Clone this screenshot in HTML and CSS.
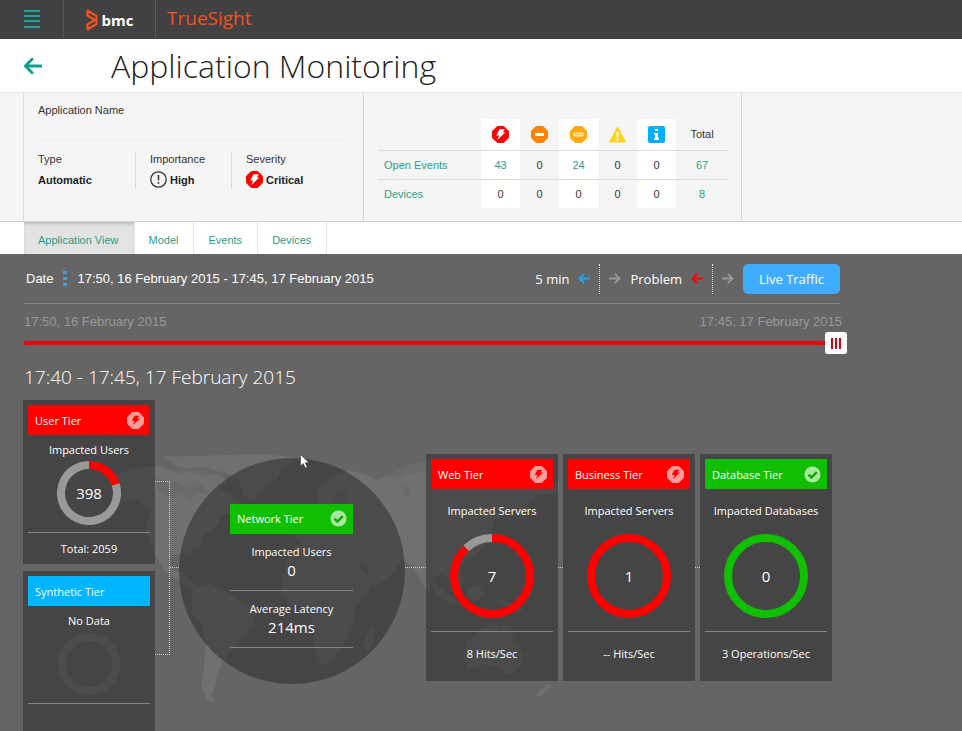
FILE: index.html
```
<!DOCTYPE html>
<html lang="en">
<head>
    <meta charset="UTF-8">
    <meta name="viewport" content="width=device-width, initial-scale=1.0">
    <title>TrueSight - Application Monitoring</title>
    <link rel="stylesheet" href="styles.css">
</head>
<body>

    <!-- shared icons -->
    <svg class="sprite" aria-hidden="true">
        <symbol id="critical" viewBox="0 0 18 18">
            <path d="M5.500 .5h7l5 5v7l-5 5h-7l-5-5v-7z" fill="#f00" stroke="#f00" stroke-linejoin="round"/>
            <path d="M8 3.500h5.500L11.500 7H14l-8.500 8 2-5H4.500z" fill="#fff"/>
        </symbol>
        <symbol id="bolt" viewBox="0 0 18 18">
            <path d="M6 1h6l5 5v6l-5 5H6l-5-5V6z" fill="#ff9c9c" stroke="#ff9c9c" stroke-width="2" stroke-linejoin="round"/>
            <path d="M8 4h5l-2 3h3l-8 7 2-4.500H5z" fill="#f00"/>
        </symbol>
        <symbol id="check" viewBox="0 0 18 18">
            <circle cx="9" cy="9" r="8.500" fill="#a8e8a0"/>
            <path d="M4.800 9.200l3 3 5.700-5.700" fill="none" stroke="#10a800" stroke-width="2.600"/>
        </symbol>
        <symbol id="arrow" viewBox="0 0 20 18">
            <path d="M19 9H3M9.500 2L2.500 9l7 7" fill="none" stroke="currentColor" stroke-width="3" stroke-linejoin="round" stroke-linecap="round"/>
        </symbol>
    </svg>

    <header class="topbar">
        <button class="menu" aria-label="Menu">
            <svg width="16" height="19" viewBox="0 0 16 19"><path d="M0 1h16M0 6h16M0 11h16M0 17h16" stroke="#1aa598" stroke-width="2"/></svg>
        </button>
        <a class="brand" href="#">
            <svg width="12" height="22" viewBox="0 0 12 22"><path d="M1.500 1.500L10.500 7v3L1.500 15.500v5l9-5.500v-3L1.500 6.500z" fill="none" stroke="#f4511e" stroke-width="2.200" stroke-linejoin="round"/></svg>
            <span>bmc</span>
        </a>
        <a class="product" href="#">TrueSight</a>
    </header>

    <div class="title-bar">
        <a class="back" href="#" aria-label="Back"><svg width="19" height="18"><use href="#arrow"/></svg></a>
        <h1>Application Monitoring</h1>
    </div>

    <section class="info">
        <div class="details">
            <div class="app-name">Application Name</div>
            <div class="facts">
                <div class="fact type"><span>Type</span><strong>Automatic</strong></div>
                <div class="fact importance"><span>Importance</span>
                    <strong><svg width="17" height="17" viewBox="0 0 17 17"><circle cx="8.500" cy="8.500" r="7.700" fill="none" stroke="#333" stroke-width="1.300"/><path d="M8.500 4v5.500M8.500 11v1.800" stroke="#333" stroke-width="1.500"/></svg>High</strong>
                </div>
                <div class="fact"><span>Severity</span>
                    <strong><svg width="17" height="17"><use href="#critical"/></svg>Critical</strong>
                </div>
            </div>
        </div>
        <div class="events">
            <table>
                <thead>
                    <tr>
                        <td></td>
                        <th scope="col" aria-label="Critical"><svg width="17" height="17"><use href="#critical"/></svg></th>
                        <th scope="col" aria-label="Major"><svg width="17" height="17" viewBox="0 0 17 17"><path d="M5 0h7l5 5v7l-5 5H5l-5-5V5z" fill="#ff8200"/><path d="M4 7h9v3H4z" fill="#fff"/></svg></th>
                        <th scope="col" aria-label="Minor"><svg width="17" height="17" viewBox="0 0 17 17"><path d="M5 0h7l5 5v7l-5 5H5l-5-5V5z" fill="#ffab10"/><path d="M4 7h9v3H4z" fill="#ffc850" stroke="#fff" stroke-width=".8"/></svg></th>
                        <th scope="col" aria-label="Warning"><svg width="17" height="17" viewBox="0 0 17 17"><path d="M8.500 1L16.500 16H.5z" fill="#ffd21c" stroke="#ffd21c" stroke-linejoin="round"/><path d="M8.500 6v5.500M8.500 13v2" stroke="#fff" stroke-width="2"/></svg></th>
                        <th scope="col" aria-label="Info"><svg width="17" height="17" viewBox="0 0 17 17"><rect width="17" height="17" rx="2" fill="#00b0ff"/><path d="M7 3h3v2H7zM6 7h4v5h1v2H6v-2h1V9H6z" fill="#fff"/></svg></th>
                        <th scope="col">Total</th>
                    </tr>
                </thead>
                <tbody>
                    <tr>
                        <th scope="row"><a href="#">Open Events</a></th>
                        <td><a href="#">43</a></td><td>0</td><td><a href="#">24</a></td><td>0</td><td>0</td><td><a href="#">67</a></td>
                    </tr>
                    <tr>
                        <th scope="row"><a href="#">Devices</a></th>
                        <td>0</td><td>0</td><td>0</td><td>0</td><td>0</td><td><a href="#">8</a></td>
                    </tr>
                </tbody>
            </table>
        </div>
    </section>

    <nav class="tabs">
        <a class="active" href="#">Application View</a>
        <a href="#">Model</a>
        <a href="#">Events</a>
        <a href="#">Devices</a>
    </nav>

    <main>
        <div class="toolbar">
            <span class="date">Date</span>
            <button class="dots" aria-label="Choose date"><svg width="4" height="16" viewBox="0 0 4 16"><path d="M0 0h4v3H0zM0 6h4v3H0zM0 12h4v3H0z" fill="#4a9fd0"/></svg></button>
            <span class="date">17:50, 16 February 2015 - 17:45, 17 February 2015</span>
            <div class="steps">
                <span>5 min</span>
                <button class="step blue" aria-label="Back 5 minutes"><svg width="12" height="11"><use href="#arrow"/></svg></button>
                <button class="step next" aria-label="Forward 5 minutes"><svg width="12" height="11"><use href="#arrow"/></svg></button>
                <span>Problem</span>
                <button class="step red" aria-label="Previous problem"><svg width="12" height="11"><use href="#arrow"/></svg></button>
                <button class="step next" aria-label="Next problem"><svg width="12" height="11"><use href="#arrow"/></svg></button>
                <button class="live">Live Traffic</button>
            </div>
        </div>

        <div class="timeline">
            <div class="range-labels"><span>17:50, 16 February 2015</span><span>17:45, 17 February 2015</span></div>
            <input type="range" min="0" max="287" value="287" aria-label="Time">
        </div>

        <h2>17:40 - 17:45, 17 February 2015</h2>

        <div class="topology">
            <svg class="map" width="480" height="280" viewBox="100 440 480 280" aria-hidden="true">
                <g fill="#707070">
                    <path d="M112 476l22-8 24-2 14 5 20-2 26 4 8 8-6 8 14 6 6 10-8 8-10 2-6 12-12 8-4 12-10 2 2 8-8-4-12 2-4 8 6 8 10 2 8 10 8 4-6 2-16-8-14-10-12-22-6-20 4-18-12-12-16 2-10 6z"/>
                    <path d="M164 457l60-2 40-1 34 4-14 8-8 14-12 8-10 14-10-6-4-14-10-8-26-6-22 2z"/>
                    <path d="M191 588l18-4 18 8 16 10 14 8-4 14-10 16-12 10-8 12-6 12-2 12-4 10 4 6-8-3-6-12 3-20 2-24-4-18-10-12z"/>
                    <path d="M288 554l10-10 22-4 12 6 16 0 8 14 10 15 12-1-10 18-12 14-2 16-8 18-14 22-10 4-8-18 0-22-6-20-18-2-10-12z"/>
                    <path d="M366 636l8-8 0 14-6 10-5-4z"/>
                    <path d="M294 535l2-12 10-4 6-10 8-4-4-14 14-14 20-7 16 5 12 5 12-6 18-10 18-2 18 2 30 2 34 6 28 4 24 7-2 10-22 2-8 10-4 18-8-10-8-2-14 10-4 14-10 16-14 10-6 8 4 14-6 6-8-10-10-6-8 8-4 12-8-14-8-14-10-4-6 6-6 10-14 9-12-22-10-3-8-8-18-2-12 6-8-3z"/>
                    <path d="M430 578l16 14 10 8 14 2-4 5-18-4-14-12zM466 590l12-6 6 10-8 8-8-4zM498 600l18 3 10 10-14-2zM487 526l-4 14-14 9 6 2 12-9z"/>
                    <path d="M466 642l18-14 12-4 4 7 6-8 8 16 10 15-4 14-12 7-10-8-12-3-18 6-4-12zM537 694l12-11 2 4-12 10z"/>
                </g>
                <path d="M156 478l20 4 10 6 14-4 8 8-12 2-4 6-12-6-10 4-12-8M166 464l24 4 18-2 12 8-16 2-14-4-16 2M380 474l14-8 8-2 12-6 30 2-10 10-24 4-12 6M332 498l12-10 4 8-8 14M345 516l14 3-8 5zM402 486l6 1 2 10-6-2z" fill="#656565" opacity=".6"/>
            </svg>

            <div class="column">
                <section class="tier small">
                    <h3 class="critical">User Tier<svg width="17" height="17"><use href="#bolt"/></svg></h3>
                    <p>Impacted Users</p>
                    <div class="ring"><svg viewBox="0 0 64 64"><circle cx="32" cy="32" r="28" stroke="#999" pathLength="100" stroke-dasharray="80 20" transform="rotate(-18 32 32)"/><circle cx="32" cy="32" r="28" stroke="#f00" pathLength="100" stroke-dasharray="20 80" transform="rotate(-90 32 32)"/></svg><b>398</b></div>
                    <footer>Total: 2059</footer>
                </section>
                <section class="tier small">
                    <h3 class="info-level">Synthetic Tier</h3>
                    <p>No Data</p>
                    <div class="ring"><svg viewBox="0 0 64 64"><circle cx="32" cy="32" r="27" stroke="#4c4c4c"/></svg></div>
                    <footer></footer>
                </section>
            </div>

            <div class="bracket"></div>
            <div class="link"></div>

            <section class="globe">
                <h3 class="ok">Network Tier<svg width="17" height="17"><use href="#check"/></svg></h3>
                <div class="metric"><p>Impacted Users</p><b>0</b></div>
                <div class="metric"><p>Average Latency</p><b>214ms</b></div>
            </section>

            <div class="link long"></div>

            <section class="tier">
                <h3 class="critical">Web Tier<svg width="17" height="17"><use href="#bolt"/></svg></h3>
                <p>Impacted Servers</p>
                <div class="ring"><svg viewBox="0 0 84 84"><circle cx="42" cy="42" r="38" stroke="#999" pathLength="100" stroke-dasharray="12 88" transform="rotate(-133 42 42)"/><circle cx="42" cy="42" r="38" stroke="#f00" pathLength="100" stroke-dasharray="88 12" transform="rotate(-90 42 42)"/></svg><b>7</b></div>
                <footer>8 Hits/Sec</footer>
            </section>
            <div class="link short"></div>
            <section class="tier">
                <h3 class="critical">Business Tier<svg width="17" height="17"><use href="#bolt"/></svg></h3>
                <p>Impacted Servers</p>
                <div class="ring"><svg viewBox="0 0 84 84"><circle cx="42" cy="42" r="38" stroke="#f00"/></svg><b>1</b></div>
                <footer>-- Hits/Sec</footer>
            </section>
            <div class="link short"></div>
            <section class="tier">
                <h3 class="ok">Database Tier<svg width="17" height="17"><use href="#check"/></svg></h3>
                <p>Impacted Databases</p>
                <div class="ring"><svg viewBox="0 0 84 84"><circle cx="42" cy="42" r="38" stroke="#10c000"/></svg><b>0</b></div>
                <footer>3 Operations/Sec</footer>
            </section>

            <svg class="cursor" width="10" height="15" viewBox="0 0 10 15" aria-hidden="true"><path d="M.5.5v11.500l2.700-2.500 2 4.500 2-1-2-4.300h3.800z" fill="#fff" stroke="#333" stroke-width=".6"/></svg>
        </div>
    </main>

</body>
</html>
```
FILE: styles.css
```
* {
    box-sizing: border-box;
}
body {
    margin: 0;
    height: 100vh;
    display: flex;
    flex-direction: column;
    overflow: hidden;
    font-family: "Liberation Sans", Arial, sans-serif;
    font-size: 11px;
    color: #333;
    background-color: #fff;
}
h1, h2, h3, p {
    margin: 0;
    font-weight: normal;
}
a {
    color: #2a9d8a;
    text-decoration: none;
}
button {
    padding: 0;
    border: none;
    background: none;
    font: inherit;
    color: inherit;
    cursor: pointer;
}
svg {
    display: block;
    flex-shrink: 0;
}
.sprite {
    position: absolute;
    width: 0;
    height: 0;
}

/* top bar */
.topbar {
    display: flex;
    flex-shrink: 0;
    height: 39px;
    background-color: #414143;
}
.menu {
    width: 64px;
    display: flex;
    align-items: center;
    justify-content: center;
    border-right: 1px solid #59595b;
}
.brand {
    width: 92px;
    display: flex;
    align-items: center;
    justify-content: center;
    gap: 4px;
    border-right: 1px solid #59595b;
    color: #fff;
    font: bold 15px "Open Sans", sans-serif;
}
.product {
    padding-left: 11px;
    color: #f4511e;
    font: 19px/37px "Open Sans", sans-serif;
}

.title-bar {
    display: flex;
    flex-shrink: 0;
    align-items: center;
    height: 53px;
    padding-left: 23px;
    gap: 69px;
}
.back {
    color: #109d90;
}
h1 {
    color: #222;
    font: 300 32px/53px "Open Sans", sans-serif;
}

/* application info */
.info {
    display: flex;
    flex-shrink: 0;
    height: 130px;
    padding-left: 23px;
    background-color: #f5f5f5;
    border-top: 1px solid #e4e4e4;
    border-bottom: 1px solid #d4d4d4;
}
.details {
    width: 341px;
    padding: 10px 13px 10px 14px;
    border-left: 1px solid #ddd;
    border-right: 1px solid #d4d4d4;
}
.app-name {
    height: 38px;
    line-height: 15px;
    border-bottom: 1px solid #eee;
}
.facts {
    display: flex;
    padding-top: 10px;
}
.fact {
    height: 38px;
    padding-right: 26px;
}
.fact + .fact {
    padding-left: 14px;
    border-left: 1px solid #ddd;
}
.fact.type {
    width: 97px;
}
.fact.importance {
    width: 96px;
}
.fact span, .fact strong {
    display: flex;
    align-items: center;
    height: 15px;
    gap: 3px;
}
.fact strong {
    margin-top: 6px;
    line-height: 16px;
    color: #222;
}
.events {
    width: 378px;
    padding: 26px 13px 26px 14px;
    border-right: 1px solid #d4d4d4;
}
.events table {
    width: 100%;
    table-layout: fixed;
    border-collapse: collapse;
}
.events th, .events td {
    width: 39px;
    height: 29px;
    padding: 0;
    font-weight: normal;
    text-align: center;
}
.events thead td {
    width: 103px;
}
.events th:last-child {
    width: auto;
}
.events thead tr {
    height: 31px;
}
.events tbody tr {
    border-top: 1px solid #ddd;
}
.events tbody th {
    padding-left: 6px;
    text-align: left;
}
.events tr :nth-child(2), .events tr :nth-child(4), .events tr :nth-child(6) {
    background-color: #fff;
}
.events svg {
    margin: 0 auto;
}

/* tabs */
.tabs {
    display: flex;
    flex-shrink: 0;
    height: 32px;
    padding-left: 24px;
}
.tabs a {
    padding: 0 15px 0 14px;
    line-height: 37px;
    border-right: 1px solid #e4e4e4;
}
.tabs .active {
    background-color: #e3e3e3;
    box-shadow: inset 0 3px 3px -1px #bbb;
}

main {
    flex: 1;
    padding-left: 24px;
    overflow: hidden;
    background-color: #656565;
    color: #fff;
    font-family: "Open Sans", sans-serif;
}
.toolbar {
    display: flex;
    align-items: center;
    max-width: 816px;
    height: 50px;
    gap: 10px;
    padding-left: 2px;
    border-bottom: 1px solid #858585;
}
.date {
    font: 13px "Liberation Sans", Arial, sans-serif;
}
.steps {
    display: flex;
    align-items: center;
    gap: 9px;
    margin-left: auto;
    font-size: 13px;
}
.step.blue {
    color: #18a8f0;
}
.step.red {
    color: #f00;
}
.step.next {
    height: 30px;
    padding-right: 9px;
    border-right: 1px dotted #ddd;
    color: #999;
    transform: scaleX(-1);
}
.live {
    width: 97px;
    height: 30px;
    border-radius: 5px;
    background-color: #40acff;
}

.timeline {
    max-width: 823px;
}
.range-labels {
    display: flex;
    justify-content: space-between;
    padding: 10px 5px 0 0;
    font: 13px/16px "Liberation Sans", Arial, sans-serif;
    color: #999;
}
input[type="range"] {
    appearance: none;
    display: block;
    width: 100%;
    height: 22px;
    margin: 2px 0 0;
    background: linear-gradient(#f0000c, #f0000c) 0 center / 100% 4px no-repeat;
}
input[type="range"]::-webkit-slider-thumb {
    appearance: none;
    width: 22px;
    height: 22px;
    border-radius: 3px;
    background: repeating-linear-gradient(90deg, #e00010 0 2px, #fff 2px 4px) center / 10px 11px no-repeat #fff;
}
h2 {
    padding: 10px 0;
    font: 300 19px/26px "Open Sans", sans-serif;
}

/* tier diagram */
.topology {
    position: relative;
    display: flex;
    align-items: center;
    margin-left: -1px;
    font-size: 11px;
    font-weight: 500;
}
.topology > * {
    position: relative;
    flex-shrink: 0;
}
.topology .map {
    position: absolute;
    left: 77px;
    top: 40px;
}
.topology .cursor {
    position: absolute;
    left: 277px;
    top: 54px;
}
.column {
    display: flex;
    flex-direction: column;
    gap: 7px;
}
.tier {
    width: 132px;
    padding: 5px 5px 0;
    background-color: rgba(32, 32, 32, 0.45);
    text-align: center;
}
h3 {
    display: flex;
    align-items: center;
    justify-content: space-between;
    width: 100%;
    height: 30px;
    padding: 0 6px 0 7px;
    font-size: 11px;
}
.topology h3 {
    font-weight: 500;
}
.critical {
    background-color: #f00;
}
.ok {
    background-color: #10c000;
}
.info-level {
    background-color: #00b4ff;
}
.tier p {
    padding-top: 11px;
    line-height: 22px;
}
.topology p {
    font-weight: 500;
}
.ring {
    display: grid;
    place-items: center;
    margin: 12px 0 13px;
}
.ring > * {
    grid-area: 1 / 1;
}
.ring svg {
    width: 84px;
}
.ring circle {
    fill: none;
    stroke-width: 8px;
}
.ring b, .metric b {
    font-size: 15px;
    font-weight: normal;
}
.tier footer {
    height: 50px;
    line-height: 44px;
    border-top: 1px solid #858585;
}
.tier.small p {
    padding-top: 5px;
    line-height: 20px;
}
.small .ring {
    margin: 1px 0 7px;
}
.small .ring svg {
    width: 64px;
}
.small footer {
    height: 32px;
    line-height: 31px;
}
.bracket {
    width: 15px;
    height: 174px;
    border: 1px dotted #ccc;
    border-left: none;
}
.link {
    width: 9px;
    border-top: 1px dotted #ccc;
}
.link.long {
    width: 21px;
}
.link.short {
    width: 5px;
}
.globe {
    display: flex;
    flex-direction: column;
    align-items: center;
    width: 226px;
    height: 226px;
    margin-top: 6px;
    padding: 46px 52px 0 51px;
    border-radius: 50%;
    background-color: rgba(32, 32, 32, 0.45);
    text-align: center;
}
.metric {
    width: 100%;
    height: 57px;
    padding-top: 9px;
    border-bottom: 1px solid #858585;
    line-height: 18px;
}
.metric b {
    display: block;
}
```
